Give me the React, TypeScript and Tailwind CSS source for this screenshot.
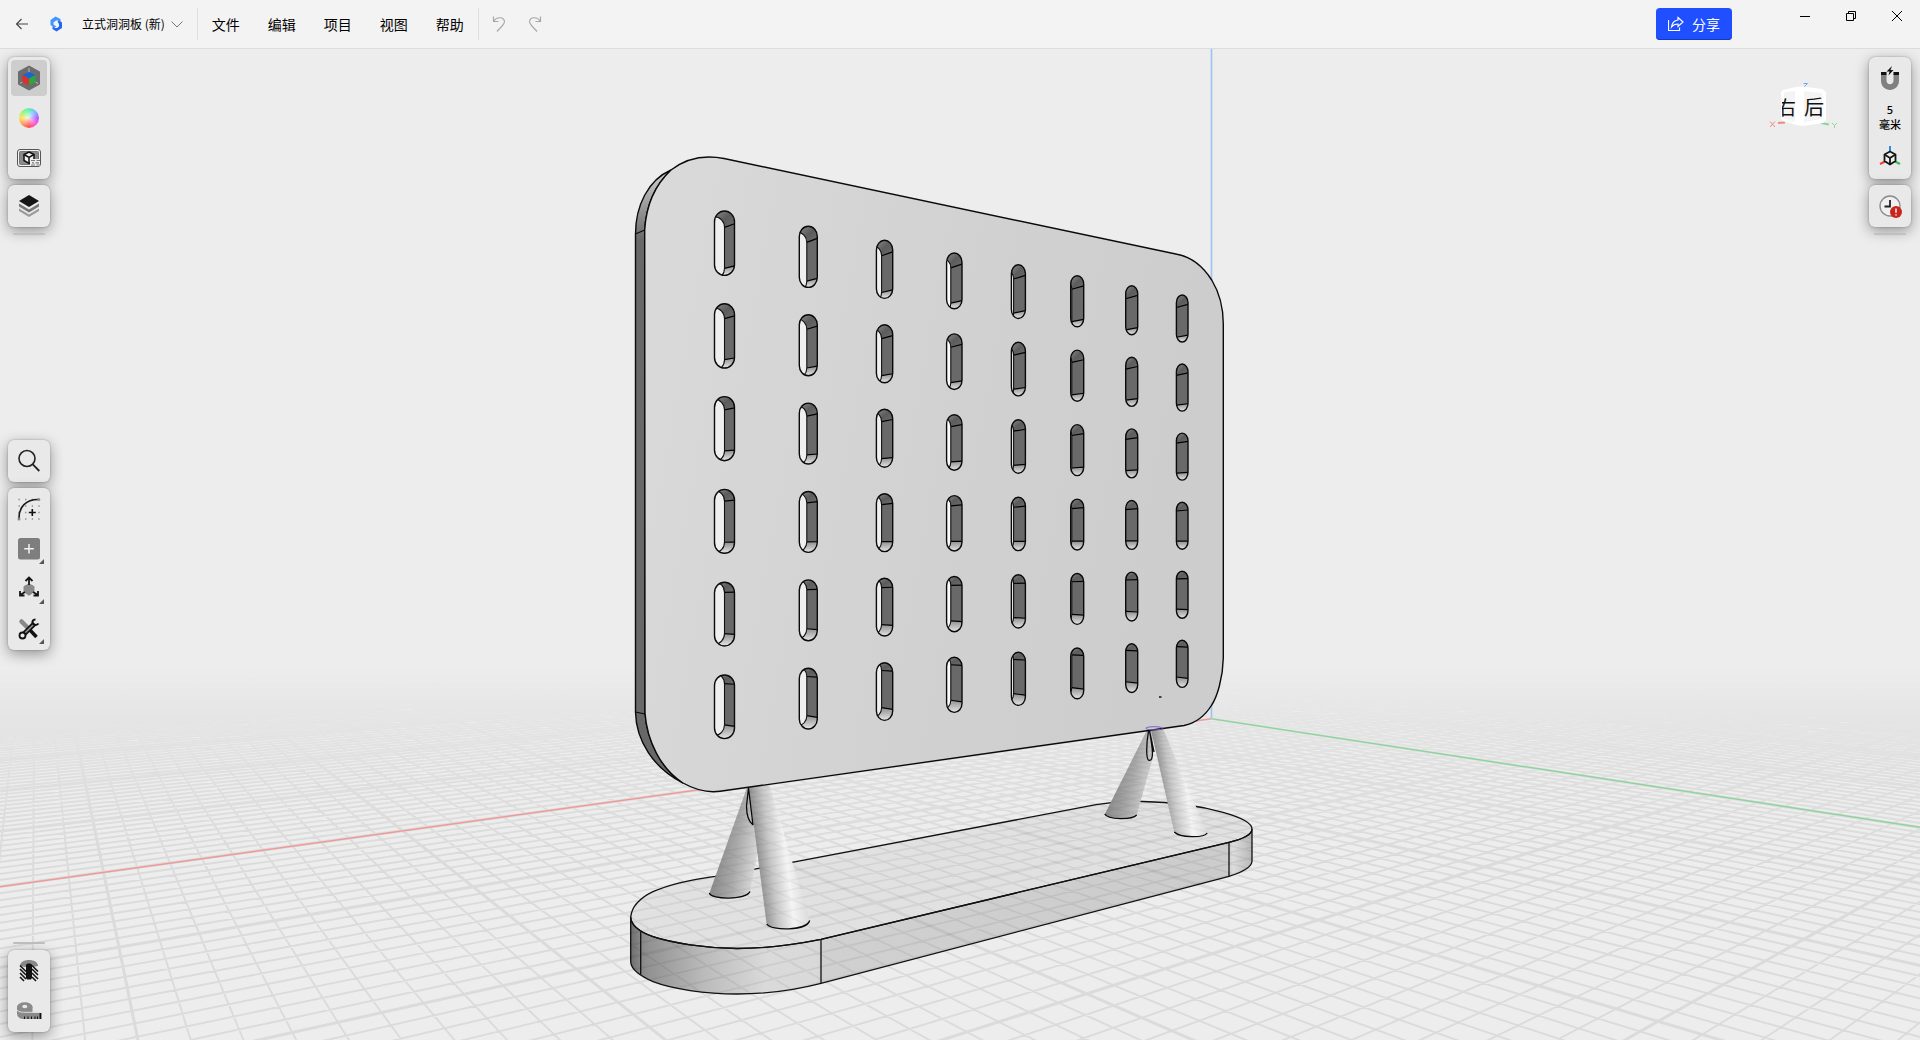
import type { ReactNode } from "react";

const HORIZON = 538;
const GRID_TOP = 640;
const GRID_BOTTOM = 1050;

type GridLine = { x1: number; x2: number; major: boolean };

function gridFamily(vanishX: number, slope0: number, step: number, from: number, to: number): GridLine[] {
  const lines: GridLine[] = [];
  for (let k = from; k <= to; k++) {
    const m = slope0 + step * k;
    lines.push({
      x1: vanishX + m * (GRID_TOP - HORIZON),
      x2: vanishX + m * (GRID_BOTTOM - HORIZON),
      major: k % 10 === 0,
    });
  }
  return lines;
}

const GRID = [
  ...gridFamily(35, 6.511, -0.1051, -90, 68),
  ...gridFamily(2516, -7.219, 0.1361, -90, 48),
];

function toPath(lines: GridLine[]) {
  return lines.map((l) => `M${l.x1.toFixed(1)} ${GRID_TOP}L${l.x2.toFixed(1)} ${GRID_BOTTOM}`).join("");
}
const MINOR = toPath(GRID.filter((l) => !l.major));
const MAJOR = toPath(GRID.filter((l) => l.major));

/* Slot columns: left, right, inner wall x, first-row top/bottom, last-row top/bottom */
const COLUMNS = [
  [714.5, 734.5, 724.5, 211, 275.4, 675, 738.6],
  [799.3, 817.3, 806.8, 226.3, 287.4, 668.3, 729],
  [876.4, 892.7, 881.6, 240.3, 298.4, 662.7, 720.4],
  [946.6, 962, 950.8, 253, 308.8, 657.3, 712.4],
  [1011.4, 1025.4, 1013.6, 264.7, 318.5, 652.3, 705.4],
  [1070.7, 1083.7, 1071.8, 275.7, 326.8, 648, 698.8],
  [1125.7, 1137.7, 1125.7, 285.7, 334.8, 643.7, 692.5],
  [1176.4, 1188, 1176.4, 295, 342, 640.3, 687.4],
];

function slotPath(l: number, r: number, t: number, b: number, cap: number) {
  const rx = (r - l) / 2;
  return `M${l} ${t + cap}A${rx} ${cap} 0 0 1 ${r} ${t + cap}V${b - cap}A${rx} ${cap} 0 0 1 ${l} ${b - cap}Z`;
}

function Slot({ col, row }: { col: number; row: number }) {
  const [l, r, w, t0, b0, t5, b5] = COLUMNS[col];
  const f = row / 5;
  const t = t0 + (t5 - t0) * f;
  const b = b0 + (b5 - b0) * f;
  const s = (b - t) / 64;
  const span = (r - w) / (r - l) / 0.5;
  const topRight = t + (12.7 - 3.4 * f) * s;
  const topLeft = topRight + (4 - 4.6 * f) * s * Math.min(span, 1.2) * 0.9;
  const botRight = b - (9.4 + 2.9 * f) * s;
  const botLeft = botRight + (2.7 - 4.4 * f) * s * Math.min(span, 1.2) * 0.9;
  const cap = 10.6 * s;
  const id = `slot-${col}-${row}`;
  const rim = slotPath(l, r, t, b, cap);
  return (
    <g>
      <clipPath id={id}>
        <path d={rim} />
      </clipPath>
      <g clipPath={`url(#${id})`}>
        <rect x={l} y={t} width={r - l} height={b - t} fill="#696969" />
        <path d={`M${l} ${t}H${r}V${topRight}L${w} ${topLeft}H${l}Z`} fill="url(#capTop)" />
        <path d={`M${l} ${b}H${r}V${botRight}L${w} ${botLeft}H${l}Z`} fill="url(#capBottom)" />
        <path d={`M${w} ${topLeft}L${r} ${topRight}M${w} ${botLeft}L${r} ${botRight}`} stroke="#000" strokeWidth="1.2" />
        {col < 6 && (
          <path
            d={slotPath(w - (r - l), w, topLeft - cap, botLeft + cap, cap)}
            fill={col < 3 ? "#efefef" : "#fafafa"}
            stroke="#111"
            strokeWidth="1.1"
          />
        )}
      </g>
      <path d={rim} fill="none" stroke="#0a0a0a" strokeWidth="1.4" />
    </g>
  );
}

const PLATE =
  "M644.7 230C646 208 654 186 671 170C684 160 697 157 709 157C714 157 719 157.5 724 158.5L1177 254.3C1192 257 1204 268 1211.7 280C1219 292 1223.3 308 1223.3 324V658C1223 678 1217 697 1211.7 705C1205 716 1196 723 1184 725.5L720 791.3C704 793.5 692 788 683 783C661 769 647 741 645 713Z";
const PLATE_SIDE =
  "M644.7 230C646 208 654 186 671 170C648 180 635.5 206 635.5 234V712C636 740 653 768 683 783C661 769 647 741 645 713Z";
const BASE_TOP =
  "M630.7 917C632 905 642 897 653 891.7C670 884 695 879 715 876.3C740 872 765 867 792 862.3L1096 804.7C1112 802 1130 801 1143 801.5C1170 802 1200 806 1223 812.3C1240 817 1252 822 1252 829C1252 835 1243 839 1229 842.3L821 939.3C792 945 765 948.5 737 948.5C705 948 672 943 653 936.7C640 932 631 926 630.7 917Z";
const BASE_SIDE =
  "M630.7 917C631 926 640 932 653 936.7C672 943 705 948 737 948.5C765 948.5 792 945 821 939.3L1229 842.3C1243 839 1252 835 1252 829V861C1252 867 1243 872 1229 876.3L821 983.3C795 990 765 994 737 994C705 994 672 989 653 981.7C641 976 631 970 630.7 961.7Z";
const CONE_A = "M747.5 786L709.3 893.5C712 900 745 900 750 892L758 850L753 786Z";
const CONE_B = "M748.7 786L766.7 924.5C772 931 806 930 809.7 921L769 783Z";
const CONE_C = "M1147 730L1104.7 814.5C1108 820 1132 819.5 1136.7 815L1153 757L1153 730Z";
const CONE_D = "M1151 730L1174.3 832.3C1180 838 1204 838 1207.3 833.3L1163 728.5Z";

function Scene() {
  return (
    <svg
      className="absolute inset-0 h-full w-full"
      viewBox="0 49 1920 991"
      preserveAspectRatio="xMidYMid slice"
      role="img"
      aria-label="立式洞洞板"
    >
      <defs>
        <linearGradient id="fade" gradientUnits="userSpaceOnUse" x1="0" y1="668" x2="0" y2="850">
          <stop offset="0" stopColor="#000" />
          <stop offset="0.1" stopColor="#2a2a2a" />
          <stop offset="0.3" stopColor="#777" />
          <stop offset="0.6" stopColor="#ccc" />
          <stop offset="1" stopColor="#fff" />
        </linearGradient>
        <mask id="gridMask" maskUnits="userSpaceOnUse" x="0" y="640" width="1920" height="410">
          <rect x="0" y="640" width="1920" height="410" fill="url(#fade)" />
        </mask>
        <linearGradient id="plate" x1="0" y1="0" x2="1" y2="0.2">
          <stop offset="0" stopColor="#dadada" />
          <stop offset="0.6" stopColor="#d1d1d1" />
          <stop offset="1" stopColor="#cdcdcd" />
        </linearGradient>
        <linearGradient id="side" gradientUnits="userSpaceOnUse" x1="0" y1="170" x2="0" y2="240">
          <stop offset="0" stopColor="#d0d0d0" />
          <stop offset="1" stopColor="#686868" />
        </linearGradient>
        <linearGradient id="capTop" x1="0" y1="0" x2="1" y2="1">
          <stop offset="0" stopColor="#8a8a8a" />
          <stop offset="0.5" stopColor="#5c5c5c" />
          <stop offset="1" stopColor="#6c6c6c" />
        </linearGradient>
        <linearGradient id="capBottom" x1="0" y1="0" x2="0" y2="1">
          <stop offset="0" stopColor="#8f8f8f" />
          <stop offset="1" stopColor="#e6e6e6" />
        </linearGradient>
        <linearGradient id="baseSide" gradientUnits="userSpaceOnUse" x1="630" y1="0" x2="1252" y2="0">
          <stop offset="0" stopColor="#6c6c6c" />
          <stop offset="0.015" stopColor="#858585" />
          <stop offset="0.03" stopColor="#929292" />
          <stop offset="0.12" stopColor="#bbbbbb" />
          <stop offset="0.22" stopColor="#dadada" />
          <stop offset="0.3" stopColor="#d9d9d9" />
          <stop offset="0.31" stopColor="#d0d0d0" />
          <stop offset="0.96" stopColor="#cccccc" />
          <stop offset="0.97" stopColor="#dddddd" />
          <stop offset="1" stopColor="#b8b8b8" />
        </linearGradient>
        <linearGradient id="coneBack" gradientUnits="objectBoundingBox" x1="0.2" y1="0.4" x2="0.95" y2="0.65">
          <stop offset="0" stopColor="#8a8a8a" />
          <stop offset="0.5" stopColor="#a9a9a9" />
          <stop offset="1" stopColor="#d6d6d6" />
        </linearGradient>
        <linearGradient id="coneFront" gradientUnits="objectBoundingBox" x1="0.15" y1="0.6" x2="0.85" y2="0.4">
          <stop offset="0" stopColor="#8e8e8e" />
          <stop offset="0.3" stopColor="#c6c6c6" />
          <stop offset="0.65" stopColor="#f4f4f4" />
          <stop offset="1" stopColor="#dadada" />
        </linearGradient>
        <clipPath id="base">
          <path d={BASE_TOP} />
          <path d={BASE_SIDE} />
        </clipPath>
        <clipPath id="cones">
          <path d={CONE_A} />
          <path d={CONE_B} />
          <path d={CONE_C} />
          <path d={CONE_D} />
        </clipPath>
      </defs>

      <rect x="0" y="49" width="1920" height="991" fill="#ededed" />
      <g mask="url(#gridMask)" fill="none" stroke="#dbdbdb">
        <path d={MINOR} strokeWidth="1.9" />
        <path d={MAJOR} strokeWidth="3" />
      </g>
      <path d="M0 886.7L1211.5 718.7" stroke="#ee9a9a" strokeWidth="1.5" />
      <path d="M1211.5 718.7L1920 827.3" stroke="#8fd3a0" strokeWidth="1.5" />
      <path d="M1211.5 49V718.7" stroke="#9cc4ef" strokeWidth="1.6" />

      <path d={BASE_SIDE} fill="url(#baseSide)" />
      <path d={BASE_TOP} fill="#e1e1e1" />
      <g clipPath="url(#base)" fill="none" stroke="#000" strokeOpacity="0.06">
        <path d={MINOR} strokeWidth="1.8" />
        <path d={MAJOR} strokeWidth="3" />
      </g>
      <g fill="none" stroke="#111" strokeWidth="1.3">
        <path d={BASE_SIDE} />
        <path d={BASE_TOP} />
        <path d="M640.7 931.5V974.5M821 939.3V983.3M1229 842.3V876.3" />
      </g>

      <path d={CONE_A} fill="url(#coneBack)" />
      <path d={CONE_C} fill="url(#coneBack)" />
      <path d={CONE_B} fill="url(#coneFront)" />
      <path d={CONE_D} fill="url(#coneFront)" />
      <g clipPath="url(#cones)" fill="none" stroke="#000" strokeOpacity="0.04">
        <path d={MINOR} strokeWidth="1.8" />
      </g>
      <g fill="none" stroke="#0a0a0a" strokeWidth="1.3">
        <path d="M709.3 893C711 900 746 900 750 891.5" />
        <path d="M766.7 924C771 931 807 931 809.7 920.5" />
        <path d="M1104.7 814C1108 820 1132 820 1136.700 815" />
        <path d="M1174.3 832C1180 838 1204 838 1207.3 833" />
        <path d="M753 825C748 821 746.5 815 746.5 806L748.500 788L753 825" />
        <path d="M1148.5 731C1146 745 1146 760 1149 760.3C1154 761 1153 750 1149.5 731L1154 752" />
      </g>

      <path d={PLATE_SIDE} fill="url(#side)" stroke="#0a0a0a" strokeWidth="1.4" />
      <path d="M635.5 234L644.7 230M635.5 712L645 714" stroke="#0a0a0a" strokeWidth="1.2" />
      <path d={PLATE} fill="url(#plate)" stroke="#0a0a0a" strokeWidth="1.4" />
      {COLUMNS.map((_, col) => [0, 1, 2, 3, 4, 5].map((row) => <Slot key={`${col}-${row}`} col={col} row={row} />))}
      <ellipse cx="1154.3" cy="728.3" rx="8.5" ry="1.6" fill="none" stroke="#7a5fc0" strokeWidth="1" />
      <path d="M1159 697H1161.5" stroke="#111" strokeWidth="1.5" />
    </svg>
  );
}

function ViewCube() {
  return (
    <svg className="absolute top-8 right-20 h-12 w-18" viewBox="1768 81 72 48" aria-label="视图立方体" role="img">
      <defs>
        <clipPath id="leftFace">
          <path d="M1782 86H1797V126H1782Z" />
        </clipPath>
      </defs>
      <path d="M1785 122.5L1778 123" stroke="#f08a80" strokeWidth="2" />
      <path d="M1821 123L1829 124.5" stroke="#86d89a" strokeWidth="2" />
      <path d="M1770 121.5L1775 127M1775 121.5L1770 127" stroke="#f08a80" />
      <path d="M1832 123L1834.5 125.5L1837 123M1834.5 125.5V128" fill="none" stroke="#86d89a" />
      <path d="M1803.5 83.5H1807.5L1804 87" fill="none" stroke="#6fa8f0" />
      <path d="M1783 90L1796 87L1803 86.5L1822 89L1826 92V121L1823 123L1803 126L1796 125L1783 121L1781 119V92Z" fill="#ffffff" />
      <path d="M1784 92.5L1795 91V122L1784 118.5Z" fill="#f4f4f4" />
      <path d="M1804 91L1822 93V119L1804 122Z" fill="#f4f4f4" />
      <g fontFamily="'Noto Sans CJK SC', sans-serif" fill="#111">
        <text x="1777" y="115" fontSize="19" clipPath="url(#leftFace)">右</text>
        <text x="1804" y="115" fontSize="20">后</text>
      </g>
    </svg>
  );
}

function Icon({ children }: { children: ReactNode }) {
  return (
    <svg className="h-9 w-9" viewBox="0 0 36 36" fill="none" aria-hidden="true">
      {children}
    </svg>
  );
}

function Tool({ label, active = false, more = false, children }: { label: string; active?: boolean; more?: boolean; children: ReactNode }) {
  return (
    <button
      type="button"
      aria-label={label}
      className={active ? "flex h-9 w-9 items-center justify-center rounded-sm bg-[#cdcdcd]" : "flex h-9 w-9 items-center justify-center rounded-sm"}
    >
      <Icon>
        {children}
        {more && <path d="M33 28V33H28Z" fill="#555" />}
      </Icon>
    </button>
  );
}

function Panel({ children }: { children: ReactNode }) {
  return (
    <div className="flex flex-col gap-1 rounded-md bg-[#e9e9e9] p-[3px] shadow-[0_0_2px_rgba(0,0,0,0.3),0_4px_14px_rgba(0,0,0,0.38)]">
      {children}
    </div>
  );
}

function Handle() {
  return <div className="h-0.5 w-8 self-center rounded-full bg-[#c0c0c0]" />;
}

function LeftTools() {
  return (
    <div className="grid h-full grid-rows-[1fr_auto_1fr] py-2 pl-2">
      <div className="flex flex-col gap-1.5">
        <Panel>
          <Tool label="模型" active>
            <path d="M18 6.5L28 12.2V23.800L18 29.500L8 23.800V12.200Z" fill="#6c6c6c" stroke="#6c6c6c" strokeLinejoin="round" strokeWidth="2" />
            <path d="M18 12V8M11.5 22L9 23.5M24.5 22L27 23.5" stroke="#bbb" />
            <path d="M18 12L24.5 15L18 18.5L11.5 15Z" fill="#1565d8" />
            <path d="M11.5 15L18 18.5V25.5L11.5 22Z" fill="#e02f2a" />
            <path d="M24.5 15L18 18.5V25.5L24.5 22Z" fill="#2aa63c" />
          </Tool>
          <button type="button" aria-label="颜色" className="flex h-9 w-9 items-center justify-center">
            <span className="h-5 w-5 rounded-full bg-[radial-gradient(circle,rgba(255,255,255,0.75),rgba(255,255,255,0)_60%),conic-gradient(#5ff0b8,#7fb8ff,#b05cff,#ff5ad0,#ff4f58,#ff9a60,#ffe060,#98f578,#5ff0b8)]" />
          </button>
          <Tool label="渲染">
            <rect x="6.5" y="9.5" width="23" height="17" rx="2.5" fill="#f4f4f4" stroke="#555" />
            <rect x="8.5" y="11.5" width="19" height="13" rx="1" fill="#8a8a8a" stroke="#777" />
            <path d="M18 12L23 14.5V20.5L18 23.5L13 20.5V14.5Z" fill="#f2f2f2" stroke="#111" strokeWidth="1.5" />
            <path d="M13 14.5L18 17.5L23 14.5M18 17.5V23" stroke="#111" strokeWidth="1.5" />
            <path d="M19 19H29V26H19Z" fill="#eee" />
            <path d="M20 20.5H24M25.5 20.5H29M20 25H24M25.5 25H29M21 22.8H23M24.5 22.8H28" stroke="#777" strokeWidth="1.2" />
          </Tool>
        </Panel>
        <Panel>
          <Tool label="图层">
            <path d="M8 20.5L18 26.500L28 20.500V23L18 29L8 23Z" fill="#9a9a9a" />
            <path d="M8 15.5L18 21.5L28 15.5V18.5L18 24.5L8 18.5Z" fill="#777" />
            <path d="M18 7L28 13L18 19L8 13Z" fill="#151515" />
          </Tool>
        </Panel>
        <Handle />
      </div>
      <div className="flex flex-col gap-1.5">
        <Panel>
          <Tool label="搜索">
            <circle cx="16" cy="15.5" r="8" stroke="#222" strokeWidth="1.6" />
            <path d="M21.8 21.3L28.3 28" stroke="#222" strokeWidth="1.8" />
          </Tool>
        </Panel>
        <Panel>
          <Tool label="草图">
            <path d="M7.500 8.500H29M7.500 15H29M7.500 21.500H29M7.500 28H29" stroke="#8a8a8a" strokeWidth="1.3" strokeDasharray="1.3 5.3" />
            <path d="M8 27C8 16 15 8.5 27 8.5" stroke="#1a1a1a" strokeWidth="1.6" />
            <circle cx="8" cy="28" r="1.5" fill="#888" />
            <circle cx="27.8" cy="8.5" r="1.5" fill="#888" />
            <path d="M21.3 18V25M17.8 21.5H24.8" stroke="#111" strokeWidth="1.6" />
          </Tool>
          <Tool label="添加" more>
            <rect x="7" y="7" width="22" height="21.5" rx="2.5" fill="#7e7e7e" />
            <path d="M18 13V22.5M13.2 17.8H22.8" stroke="#f2f2f2" strokeWidth="1.5" />
          </Tool>
          <Tool label="变换" more>
            <path d="M14 16L18 14L22 16V20L18 23L14 20Z" fill="#8a8a8a" stroke="#8a8a8a" strokeWidth="3" strokeLinejoin="round" />
            <path d="M18 14V7M14.5 10L18 6.5L21.5 10M14 21L9 24M9 20V24.5H13.5M22 21L27 24M27 20V24.5H22.5" stroke="#151515" strokeWidth="1.8" />
          </Tool>
          <Tool label="工具" more>
            <path d="M10.5 10.5L17 17" stroke="#888" strokeWidth="4.5" strokeLinecap="round" />
            <path d="M18 18L25.5 26" stroke="#111" strokeWidth="3.5" />
            <path d="M13 23L23.5 12.5" stroke="#111" strokeWidth="5" />
            <path d="M13.5 22.5L23 13" stroke="#999" strokeWidth="1.5" />
            <circle cx="11.5" cy="24.5" r="3" stroke="#111" strokeWidth="1.8" fill="#e9e9e9" />
            <path d="M27.5 12.5C25.5 15 21 14 21.5 10.5C22 9 23 8.5 24.5 8.5" stroke="#111" strokeWidth="2" />
          </Tool>
        </Panel>
      </div>
      <div className="flex flex-col justify-end gap-1.5">
        <Handle />
        <Panel>
          <Tool label="剖面">
            <path d="M9 13C9 5 27 5 27 13L22 14H14Z" fill="#888" />
            <path d="M9 16L15 22M9 20L15 26M9 24L13 28M9 12.5L15 18.5M21 12.5L27 18.5M21 16L27 22M21 20L27 26M21 24L25 28" stroke="#151515" strokeWidth="1.6" />
            <path d="M15 12C15 10 21 10 21 12V25L20 26.5H16L15 25Z" fill="#111" />
          </Tool>
          <Tool label="测量">
            <path d="M6 14V20C6 24 9 26 12 26H29V20H21.5V14Z" fill="#8a8a8a" />
            <ellipse cx="13.8" cy="14" rx="7.8" ry="4.7" fill="#8a8a8a" />
            <ellipse cx="13.8" cy="13.5" rx="2.6" ry="1.8" fill="#e9e9e9" />
            <path d="M6 17C8 19.5 12 19.3 15 19.3H29" stroke="#ddd" strokeWidth="1" />
            <path d="M29.5 20V26" stroke="#111" strokeWidth="1.8" />
            <path d="M13.5 23.5V26M17 23.5V26M20.5 23.5V26M24 23.5V26M26.5 23.5V26" stroke="#111" />
          </Tool>
        </Panel>
      </div>
    </div>
  );
}

function RightTools() {
  return (
    <div className="flex flex-col gap-1.5 py-2 pr-[9px]">
      <Panel>
        <Tool label="吸附">
          <path d="M9 14V20.5C9 33 27 33 27 20.5V14H21.5V20.5C21.5 25.5 14.5 25.5 14.5 20.5V14Z" fill="#808080" />
          <path d="M9 12H14.5V15H9ZM21.5 12H27V15H21.5Z" fill="#111" />
          <path d="M20 6L14.5 11.5H17.5L16.5 15.5L21.5 10H18.5Z" fill="#111" />
        </Tool>
        <button type="button" className="flex h-9 w-9 flex-col items-center justify-center text-[11px] leading-4 font-medium text-black">
          <span className="font-['Noto_Sans'] leading-3">5</span>
          <span>毫米</span>
        </button>
        <Tool label="坐标轴">
          <path d="M18 6V12" stroke="#2b8cf0" strokeWidth="2" />
          <path d="M8 24L13 21.5" stroke="#ee4136" strokeWidth="2" />
          <path d="M28 24L23 21.5" stroke="#2fbf56" strokeWidth="2" />
          <path d="M18 11.5L23.5 14.5V21L18 24.5L12.5 21V14.5Z" fill="#eee" stroke="#151515" strokeWidth="1.8" strokeLinejoin="round" />
          <path d="M12.5 14.5L18 18L23.5 14.5M18 18V24" stroke="#151515" strokeWidth="1.8" />
        </Tool>
      </Panel>
      <Panel>
        <Tool label="历史记录">
          <circle cx="18" cy="18" r="10" fill="#f0f0f0" stroke="#8a8a8a" strokeWidth="1.3" />
          <path d="M18 12V18.5H12.5" stroke="#222" strokeWidth="1.8" />
          <circle cx="24" cy="24" r="6" fill="#c8261c" />
          <path d="M24 20.5V24.8M24 26.2V27.6" stroke="#fff" strokeWidth="1.4" />
        </Tool>
      </Panel>
      <Handle />
    </div>
  );
}

const MENUS = ["文件", "编辑", "项目", "视图", "帮助"];

function TopBar() {
  return (
    <header className="relative z-10 flex shrink-0 justify-between border-b border-[#dcdcdc] bg-[#f3f3f3]">
      <div className="flex h-12 items-center">
        <button type="button" aria-label="返回" className="flex w-11 justify-center">
          <svg className="h-4 w-4" viewBox="0 0 16 16" fill="none" stroke="#444" strokeWidth="1.1" aria-hidden="true">
            <path d="M14 8H2.5M7.5 3L2.5 8L7.5 13" />
          </svg>
        </button>
        <svg className="ml-1 h-4 w-4" viewBox="0 0 16 16" fill="none" aria-hidden="true">
          <path d="M2.5 4L7.500 0.500L12.500 3V6L10 4.500H8L5.500 6.500V8.500L8.500 10.500L6 11.500L2.500 9Z" fill="#3f97ff" />
          <path d="M9.500 5.500L11 4.500L14 6.500V12L8.500 15.500L4.500 13V10.500L7.500 12H9L11 10.500V8Z" fill="#2467f5" />
        </svg>
        <button type="button" className="ml-[18px] flex items-center gap-1.5 text-xs text-black">
          <span className="whitespace-nowrap">立式洞洞板 (新)</span>
          <svg className="h-3 w-3" viewBox="0 0 12 12" fill="none" stroke="#777" aria-hidden="true">
            <path d="M0.5 3.5L6 9L11.5 3.5" />
          </svg>
        </button>
        <div className="ml-3.5 h-8 w-px bg-[#dedede]" />
        <nav className="flex">
          {MENUS.map((name) => (
            <button key={name} type="button" className="px-3.5 text-sm text-black">
              {name}
            </button>
          ))}
        </nav>
        <div className="h-8 w-px bg-[#dedede]" />
        <button type="button" aria-label="撤消" className="ml-3 flex h-8 w-4 items-center justify-center">
          <svg className="h-4 w-4" viewBox="0 0 16 16" fill="none" stroke="#a8a8a8" strokeWidth="1.2" aria-hidden="true">
            <path d="M2.5 0.5V5.5H7.5M2.5 5.5C6 0 13 1 13.5 5.5C13.5 8.5 10 11 6 15.5" />
          </svg>
        </button>
        <button type="button" aria-label="重做" className="ml-5 flex h-8 w-4 items-center justify-center">
          <svg className="h-4 w-4" viewBox="0 0 16 16" fill="none" stroke="#a8a8a8" strokeWidth="1.2" aria-hidden="true">
            <path d="M13.5 0.5V5.5H8.5M13.5 5.5C10 0 3 1 2.5 5.5C2.5 8.5 6 11 10 15.5" />
          </svg>
        </button>
      </div>
      <div className="flex h-12">
        <button type="button" className="mt-2 mr-[50px] flex h-8 items-center gap-2 rounded-sm bg-[#1f4fff] px-3 text-sm text-white shadow-[inset_0_-1px_0_#173bc0]">
          <svg className="h-4 w-4" viewBox="0 0 16 16" fill="none" stroke="#fff" strokeWidth="1.2" aria-hidden="true">
            <path d="M0.5 4V14.5H11.5V11.5M10 1.5L15 6L10 10.5V8C7 8 5 9 3.5 11C4 7 6.5 4.5 10 4Z" />
          </svg>
          <span>分享</span>
        </button>
        <button type="button" aria-label="最小化" className="flex h-8 w-[46px] items-center justify-center">
          <svg className="h-2.5 w-2.5" viewBox="0 0 10 10" stroke="#000" aria-hidden="true">
            <path d="M0 5.5H10" />
          </svg>
        </button>
        <button type="button" aria-label="还原" className="flex h-8 w-[46px] items-center justify-center">
          <svg className="h-2.5 w-2.5" viewBox="0 0 10 10" fill="none" stroke="#000" aria-hidden="true">
            <path d="M0.5 2.5H7.5V9.5H0.5ZM2.5 2.5V0.5H9.5V7.5H7.5" />
          </svg>
        </button>
        <button type="button" aria-label="关闭" className="flex h-8 w-[46px] items-center justify-center">
          <svg className="h-2.5 w-2.5" viewBox="0 0 10 10" stroke="#000" aria-hidden="true">
            <path d="M0 0L10 10M10 0L0 10" />
          </svg>
        </button>
      </div>
    </header>
  );
}

export default function App() {
  return (
    <div className="flex h-screen flex-col overflow-hidden bg-[#ededed] font-['Noto_Sans_CJK_SC',sans-serif]">
      <TopBar />
      <main className="relative min-h-0 flex-1">
        <Scene />
        <ViewCube />
        <div className="relative flex h-full justify-between">
          <LeftTools />
          <RightTools />
        </div>
      </main>
    </div>
  );
}
